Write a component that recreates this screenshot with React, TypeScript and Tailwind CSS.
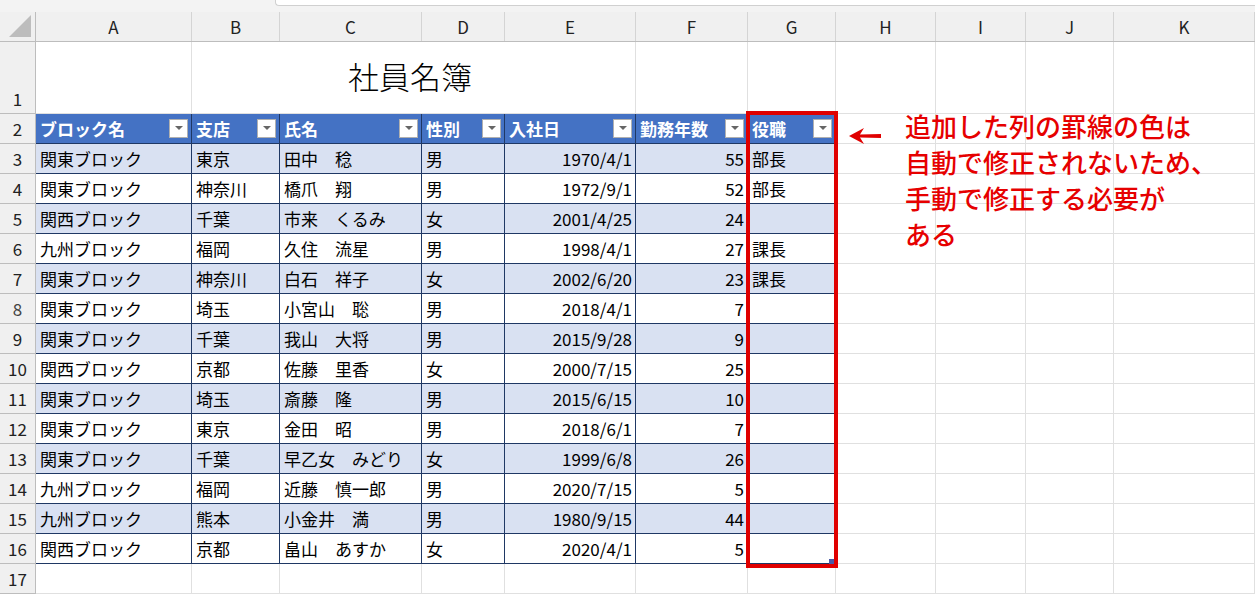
import React from "react";

const cols = [156, 88, 142, 83, 131, 112, 88, 100, 90, 88, 141];
const letters = ["A","B","C","D","E","F","G","H","I","J","K"];
const headers = ["ブロック名","支店","氏名","性別","入社日","勤務年数","役職"];
const rows: string[][] = [
  ["関東ブロック","東京","田中　稔","男","1970/4/1","55","部長"],
  ["関東ブロック","神奈川","橋爪　翔","男","1972/9/1","52","部長"],
  ["関西ブロック","千葉","市来　くるみ","女","2001/4/25","24",""],
  ["九州ブロック","福岡","久住　流星","男","1998/4/1","27","課長"],
  ["関東ブロック","神奈川","白石　祥子","女","2002/6/20","23","課長"],
  ["関東ブロック","埼玉","小宮山　聡","男","2018/4/1","7",""],
  ["関東ブロック","千葉","我山　大将","男","2015/9/28","9",""],
  ["関西ブロック","京都","佐藤　里香","女","2000/7/15","25",""],
  ["関東ブロック","埼玉","斎藤　隆","男","2015/6/15","10",""],
  ["関東ブロック","東京","金田　昭","男","2018/6/1","7",""],
  ["関東ブロック","千葉","早乙女　みどり","女","1999/6/8","26",""],
  ["九州ブロック","福岡","近藤　慎一郎","男","2020/7/15","5",""],
  ["九州ブロック","熊本","小金井　満","男","1980/9/15","44",""],
  ["関西ブロック","京都","畠山　あすか","女","2020/4/1","5",""],
];
const font = { fontFamily: '"Noto Sans CJK JP", "Liberation Sans", sans-serif' };

function Filter() {
  return (
    <div className="w-[19px] h-[19px] shrink-0 bg-white border border-[#b0b0b0] flex items-center justify-center ml-auto mr-[1px]">
      <svg width="8" height="5" viewBox="0 0 8 5"><path d="M0 0 L8 0 L4 4 Z" fill="#666" /></svg>
    </div>
  );
}

export default function App() {
  const rowH = (i: number) => (i === 0 ? 72 : 30);
  return (
    <div className="w-[1255px] h-[600px] bg-white relative overflow-hidden text-black" style={font}>
      <div className="h-[12px] bg-[#f3f3f3] relative">
        <div className="absolute left-[275px] top-0 w-[990px] h-[6px] bg-white border-l border-b border-[#d0d0d0] rounded-bl" />
      </div>
      <div className="flex h-[30px] bg-[#f0f0f0] border-b border-[#bdbdbd]">
        <div className="w-[36px] shrink-0 border-r border-[#bdbdbd] relative">
          <svg className="absolute right-[4px] bottom-[4px]" width="22" height="22" viewBox="0 0 22 22"><path d="M22 0 L22 22 L0 22 Z" fill="#bdbdbd" /></svg>
        </div>
        {cols.map((w, i) => (
          <div key={i} style={{ width: w }} className="shrink-0 border-r border-[#d4d4d4] flex items-center justify-center text-[17px] text-[#222]">
            {letters[i]}
          </div>
        ))}
      </div>
      {Array.from({ length: 17 }).map((_, r) => {
        const h = rowH(r);
        return (
          <div key={r} className="flex" style={{ height: h }}>
            <div className={`w-[36px] shrink-0 bg-[#f0f0f0] border-r border-b border-[#bdbdbd] flex items-end justify-center text-[17px] ${r === 7 ? "text-[#444]" : "text-[#222]"}`}>
              <span className="leading-[29px]">{r + 1}</span>
            </div>
            {cols.map((w, c) => {
              if (r === 0) {
                if (c === 1) {
                  return (
                    <div key={c} style={{ width: cols[1] + cols[2] + cols[3] + cols[4] }} className="shrink-0 border-r border-b border-[#e0e0e0] relative">
                      <span className="absolute left-[156px] top-[18px] text-[31px] leading-none font-light">社員名簿</span>
                    </div>
                  );
                }
                if (c >= 2 && c <= 4) return null;
                return <div key={c} style={{ width: w }} className="shrink-0 border-r border-b border-[#e0e0e0]" />;
              }
              if (c <= 6 && r <= 15) {
                const header = r === 1;
                const band = !header && r % 2 === 0;
                const txt = header ? headers[c] : rows[r - 2][c];
                const right = !header && (c === 4 || c === 5);
                return (
                  <div key={c} style={{ width: w }} className={`shrink-0 border-r border-b border-[#1f3864] flex items-center text-[17px] px-[4px] ${header ? "bg-[#4472c4] text-white font-bold pr-[2px]" : band ? "bg-[#d9e1f2]" : "bg-white"} ${right ? "justify-end pr-[3px]" : ""}`}>
                    <span className="whitespace-nowrap">{txt}</span>
                    {header && <Filter />}
                  </div>
                );
              }
              return <div key={c} style={{ width: w }} className="shrink-0 border-r border-b border-[#e0e0e0]" />;
            })}
          </div>
        );
      })}
      <div className="absolute left-[746px] top-[111px] w-[92px] h-[457px] border-4 border-solid border-[#e00000]">
        <div className="absolute right-0 bottom-0 w-[5px] h-[5px] bg-[#4a5aa8]" />
      </div>
      <svg className="absolute left-[848px] top-[126px]" width="36" height="20" viewBox="0 0 36 20">
        <path d="M1 10 L16 2 L12 8.5 L33 8 L33 12 L12 11.5 L16 18 Z" fill="#e00000" />
      </svg>
      <div className="absolute left-[905px] top-[108px] text-[26px] leading-[36px] text-[#e60000] font-medium">
        <div>追加した列の罫線の色は</div>
        <div>自動で修正されないため、</div>
        <div>手動で修正する必要が</div>
        <div>ある</div>
      </div>
    </div>
  );
}
